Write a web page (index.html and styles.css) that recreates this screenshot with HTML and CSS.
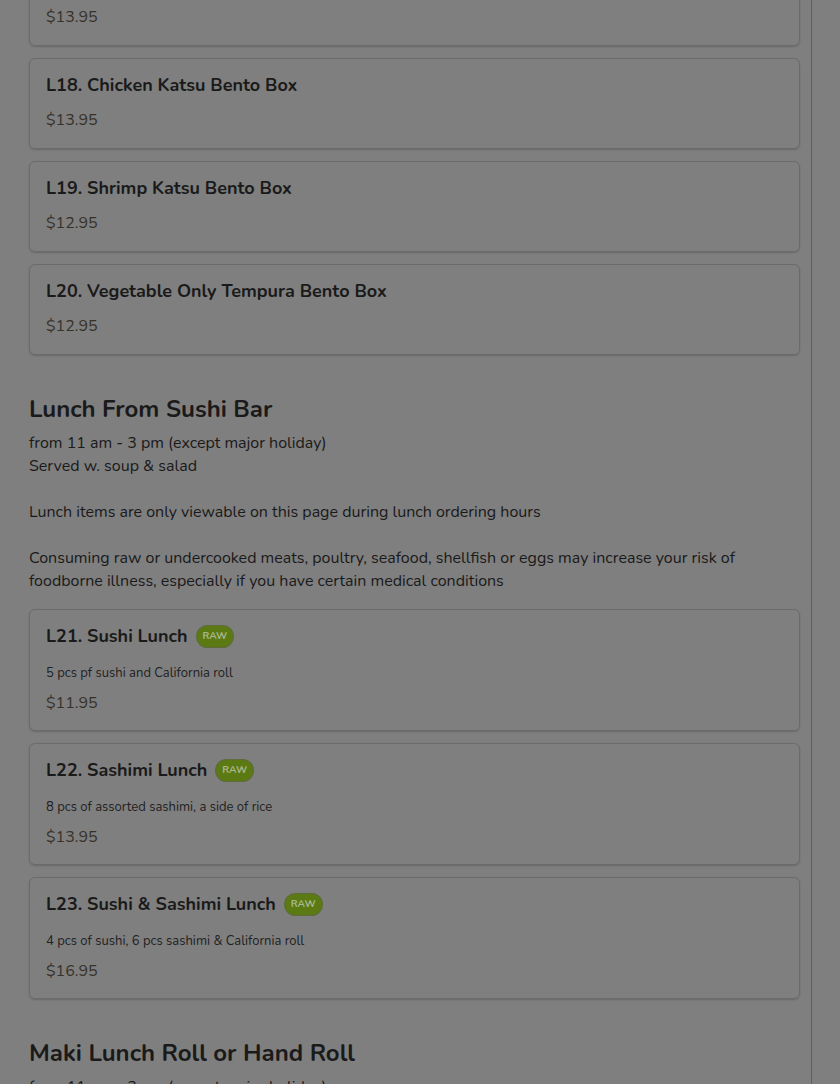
FILE: index.html
```html
<!DOCTYPE html>
<html lang="en">
<head>
<meta charset="utf-8">
<title>Lunch Menu</title>
<link rel="stylesheet" href="styles.css">
</head>
<body>
<div class="page">
  <div class="menu">
    <div class="card">
      <div class="title">L17. Teriyaki Bento Box</div>
      <div class="price">$13.95</div>
    </div>
    <div class="card">
      <div class="title">L18. Chicken Katsu Bento Box</div>
      <div class="price">$13.95</div>
    </div>
    <div class="card">
      <div class="title">L19. Shrimp Katsu Bento Box</div>
      <div class="price">$12.95</div>
    </div>
    <div class="card">
      <div class="title">L20. Vegetable Only Tempura Bento Box</div>
      <div class="price">$12.95</div>
    </div>

    <h2 class="section">Lunch From Sushi Bar</h2>
    <p class="note">from 11 am - 3 pm (except major holiday)<br>Served w. soup &amp; salad<br><br>Lunch items are only viewable on this page during lunch ordering hours<br><br>Consuming raw or undercooked meats, poultry, seafood, shellfish or eggs may increase your risk of foodborne illness, especially if you have certain medical conditions</p>

    <div class="card card-desc">
      <div class="title">L21. Sushi Lunch <span class="badge">RAW</span></div>
      <div class="desc">5 pcs pf sushi and California roll</div>
      <div class="price">$11.95</div>
    </div>
    <div class="card card-desc">
      <div class="title">L22. Sashimi Lunch <span class="badge">RAW</span></div>
      <div class="desc">8 pcs of assorted sashimi, a side of rice</div>
      <div class="price">$13.95</div>
    </div>
    <div class="card card-desc">
      <div class="title">L23. Sushi &amp; Sashimi Lunch <span class="badge">RAW</span></div>
      <div class="desc">4 pcs of sushi, 6 pcs sashimi &amp; California roll</div>
      <div class="price">$16.95</div>
    </div>

    <h2 class="section">Maki Lunch Roll or Hand Roll</h2>
    <p class="note">from 11 am - 3 pm (except major holiday)</p>
  </div>
</div>
</body>
</html>
```

FILE: styles.css
```css
html, body {
  margin: 0;
  padding: 0;
  background: #7f7f7f;
  height: 100%;
  overflow: hidden;
}
body {
  font-family: "Nunito", "Lato", "Open Sans", sans-serif;
  color: #1a1a1a;
}
.page {
  width: 812px;
  box-sizing: border-box;
  min-height: 100%;
  border-right: 1px solid #5e5e5e;
  padding: 0 11px 0 29px;
}
.menu {
  margin-top: -45px;
  display: flex;
  flex-direction: column;
}
.card {
  border: 1px solid #6b6b6b;
  border-radius: 6px;
  padding: 15px 16px 17px;
  margin-bottom: 12px;
  box-shadow: 0 1px 2px rgba(0,0,0,0.18);
  display: flex;
  flex-direction: column;
}
.card-desc {
  padding-bottom: 16px;
}
.title {
  font-size: 18px;
  font-weight: 700;
  line-height: 22px;
  display: flex;
  align-items: center;
}
.price {
  margin-top: 13px;
  font-size: 16px;
  line-height: 22px;
  color: #36322a;
}
.desc {
  margin-top: 17px;
  font-size: 13px;
  line-height: 18px;
  color: #222;
}
.desc + .price {
  margin-top: 10px;
}
.badge {
  display: inline-block;
  margin-left: 9px;
  background: #5b7a14;
  color: #a8b890;
  font-size: 10px;
  font-weight: 700;
  line-height: 21px;
  padding: 0 6px;
  border-radius: 11px;
  box-shadow: 0 0 0 1px rgba(70,95,10,0.6);
}
.section {
  margin: 26px 0 7px;
  font-size: 24px;
  line-height: 32px;
  font-weight: 700;
}
.note {
  margin: 0 0 16px;
  font-size: 16px;
  line-height: 23px;
}
```
